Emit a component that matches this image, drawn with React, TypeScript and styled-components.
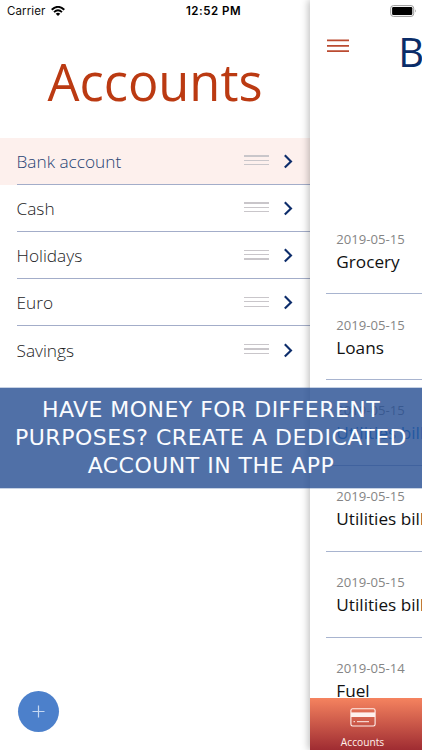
import React from "react";
import styled, { createGlobalStyle } from "styled-components";

const GlobalStyle = createGlobalStyle`
  * { box-sizing: border-box; }
  body { margin: 0; background: #fff; overflow: hidden; }
`;

const Screen = styled.main`
  position: relative;
  display: flex;
  width: 422px;
  height: 750px;
  overflow: hidden;
  background: #fff;
  font-family: "Open Sans", "Noto Sans", sans-serif;
  white-space: nowrap;
`;

const StatusBar = styled.header`
  position: absolute;
  z-index: 3;
  inset: 0 0 auto 0;
  height: 22px;
  padding: 0 5px 0 7px;
  display: grid;
  grid-template-columns: 1fr auto 1fr;
  align-items: center;
  font: 400 11.5px/22px Inter, sans-serif;
  color: #111;
`;

const Carrier = styled.div`
  display: flex;
  align-items: center;
  gap: 6px;
  letter-spacing: 0.1px;
`;

const Clock = styled.time`
  padding-left: 3px;
  font-weight: 600;
  letter-spacing: 0.52px;
  color: #000;
`;

const BatterySlot = styled.div`
  display: flex;
  justify-content: flex-end;
`;

const Drawer = styled.aside`
  width: 310px;
  flex: none;
  display: flex;
  flex-direction: column;
  justify-content: space-between;
`;

const DrawerTitle = styled.h1`
  margin: 0;
  height: 137.7px;
  padding-top: 48px;
  text-align: center;
  font-size: 50.6px;
  line-height: 68px;
  font-weight: 400;
  color: #bb3a12;
`;

const AccountList = styled.ul`
  margin: 0;
  padding: 0;
  list-style: none;
`;

const AccountRow = styled.li<{ $selected?: boolean }>`
  height: 47.2px;
  padding-left: 16.5px;
  background: ${(p) => (p.$selected ? "#fdf0ed" : "transparent")};
  color: ${(p) => (p.$selected ? "#274374" : "#1c1c1e")};
  &:last-child > div { border-color: transparent; }
`;

const AccountLine = styled.div`
  height: 100%;
  display: flex;
  align-items: center;
  border-bottom: 1px solid #a3adc9;
  padding-right: 17px;
`;

const AccountName = styled.span`
  flex: 1;
  font-size: 17.25px;
  font-weight: 300;
  padding-top: 1.2px;
`;

const Handle = styled.span`
  width: 25px;
  height: 10px;
  margin: 0 15px 1px 0;
  display: flex;
  flex-direction: column;
  justify-content: space-between;
  & > i { height: 1.3px; background: #c9c6ca; }
`;

const AddButton = styled.button`
  width: 41px;
  height: 41px;
  margin: 0 0 18.5px 18.4px;
  padding: 0;
  border: 0;
  border-radius: 50%;
  background: #4c80cb;
  display: grid;
  place-items: center;
`;

const Pane = styled.section`
  position: relative;
  flex: 1;
  min-width: 0;
  display: flex;
  flex-direction: column;
  background: #fff;
  box-shadow: -2px 0 7px rgba(0, 0, 0, 0.24);
`;

const PaneHeader = styled.div`
  height: 208.3px;
  flex: none;
  display: flex;
  align-items: flex-start;
  padding: 39px 0 0 17.3px;
`;

const MenuButton = styled.button`
  width: 22px;
  height: 14px;
  margin-right: 50px;
  padding: 0;
  border: 0;
  background: none;
  flex: none;
`;

const PaneTitle = styled.h2`
  margin: -15px 0 0 -1px;
  font-size: 40px;
  line-height: 56px;
  font-weight: 400;
  color: #0a2c68;
`;

const Entries = styled.ul`
  flex: 1;
  min-height: 0;
  overflow: hidden;
  margin: 0;
  padding: 0 0 0 16px;
  list-style: none;
`;

const Entry = styled.li<{ $active?: boolean }>`
  height: 85.85px;
  padding: 20.5px 0 0 10.3px;
  border-bottom: 1px solid #a8b4cf;
  color: ${(p) => (p.$active ? "#087be0" : "#111")};
`;

const EntryDate = styled.div`
  font-size: 13.1px;
  line-height: 20px;
  color: #858585;
`;

const EntryName = styled.div`
  font-size: 17.2px;
  line-height: 25px;
`;

const TabBar = styled.nav`
  height: 52px;
  flex: none;
  background: linear-gradient(#f5835f, #9f2c32);
  color: #fff1ed;
`;

const Tab = styled.div`
  width: 105px;
  padding-top: 10px;
  display: flex;
  flex-direction: column;
  align-items: center;
  font-size: 10.2px;
  line-height: 15px;
  gap: 7.5px;
`;

const Banner = styled.div`
  position: absolute;
  z-index: 2;
  top: 388px;
  left: 0;
  right: 0;
  height: 100px;
  padding-top: 8px;
  background: rgba(39, 79, 147, 0.81);
  box-shadow: 0 0 0 1px rgba(70, 105, 165, 0.3);
  color: #fafcff;
  text-align: center;
  font: 400 22px/28.2px Verdana, "DejaVu Sans", sans-serif;
`;

const BannerLine = styled.div<{ $spacing: number }>`
  letter-spacing: ${(p) => p.$spacing}px;
`;

const WifiIcon = () => (
  <svg width="14" height="10" viewBox="0 0 14 10">
    <g fill="none" stroke="#000" strokeWidth="1.9">
      <path d="M.7 3.7Q7-2 13.3 3.7" />
      <path d="M3 6.1q4-3.6 8 0" />
    </g>
    <path d="M4.7 7.7Q7 5.8 9.3 7.7L7 10z" />
  </svg>
);

const BatteryIcon = () => (
  <svg width="27" height="12" viewBox="0 0 27 12">
    <rect x=".7" y=".6" width="23" height="10.8" rx="2.7" fill="#fff" stroke="#999" />
    <rect x="2.1" y="2" width="20.2" height="8" rx="1.2" fill="#000" />
    <path d="M25 4.2q1.8 1.7 0 3.4z" fill="#999" />
  </svg>
);

const ChevronIcon = () => (
  <svg width="9" height="16" viewBox="0 0 9 16">
    <path d="M.8 2.2 7 8.4l-6.2 6.2" fill="none" stroke="#0d2d6b" strokeWidth="2.1" />
  </svg>
);

const MenuIcon = () => (
  <svg width="22" height="14" viewBox="0 0 22 14" display="block">
    <path d="M0 1.4h22M0 6.8h22M0 12.2h22" stroke="#bb4b31" strokeWidth="1.8" />
  </svg>
);

const CardIcon = () => (
  <svg width="26" height="19" viewBox="0 0 26 19" fill="none" stroke="#fff1ed">
    <rect x=".9" y=".8" width="24.2" height="17.2" rx="1.7" strokeWidth="1.1" />
    <path d="M1 6.7h24" strokeWidth="4.6" />
    <path d="M3.5 13.7H5m2 0h12" strokeWidth="1" />
  </svg>
);

const PlusIcon = () => (
  <svg width="13" height="13" viewBox="0 0 13 13">
    <path d="M6.5.5v12M.5 6.5h12" stroke="#c5d8f2" strokeWidth="1.2" />
  </svg>
);

const accounts = ["Bank account", "Cash", "Holidays", "Euro", "Savings"];

const entries = [
  { date: "2019-05-15", name: "Grocery" },
  { date: "2019-05-15", name: "Loans" },
  { date: "2019-05-15", name: "Utilities bills", active: true },
  { date: "2019-05-15", name: "Utilities bills" },
  { date: "2019-05-15", name: "Utilities bills" },
  { date: "2019-05-14", name: "Fuel" },
];

export default function App() {
  return (
    <>
      <GlobalStyle />
      <Screen>
        <StatusBar>
          <Carrier>Carrier <WifiIcon /></Carrier>
          <Clock>12:52 PM</Clock>
          <BatterySlot><BatteryIcon /></BatterySlot>
        </StatusBar>
        <Drawer>
          <div>
            <DrawerTitle>Accounts</DrawerTitle>
            <AccountList>
              {accounts.map((name, i) => (
                <AccountRow key={name} $selected={i === 0}>
                  <AccountLine>
                    <AccountName>{name}</AccountName>
                    <Handle><i /><i /><i /></Handle>
                    <ChevronIcon />
                  </AccountLine>
                </AccountRow>
              ))}
            </AccountList>
          </div>
          <AddButton aria-label="Add account"><PlusIcon /></AddButton>
        </Drawer>
        <Pane>
          <PaneHeader>
            <MenuButton aria-label="Menu"><MenuIcon /></MenuButton>
            <PaneTitle>Bank account</PaneTitle>
          </PaneHeader>
          <Entries>
            {entries.map((entry, i) => (
              <Entry key={i} $active={entry.active}>
                <EntryDate>{entry.date}</EntryDate>
                <EntryName>{entry.name}</EntryName>
              </Entry>
            ))}
          </Entries>
          <TabBar>
            <Tab><CardIcon />Accounts</Tab>
          </TabBar>
        </Pane>
        <Banner>
          <BannerLine $spacing={0.46}>HAVE MONEY FOR DIFFERENT</BannerLine>
          <BannerLine $spacing={0.53}>PURPOSES? CREATE A DEDICATED</BannerLine>
          <BannerLine $spacing={0.48}>ACCOUNT IN THE APP</BannerLine>
        </Banner>
      </Screen>
    </>
  );
}
